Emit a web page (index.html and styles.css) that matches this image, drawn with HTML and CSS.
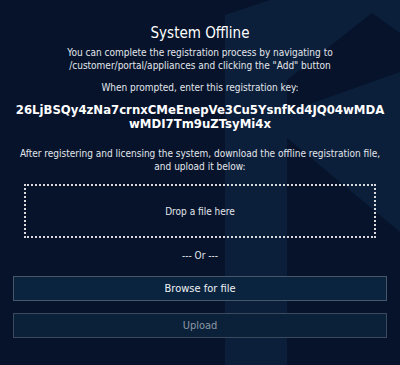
FILE: index.html
```html
<!DOCTYPE html>
<html lang="en">
<head>
<meta charset="utf-8">
<title>System Offline</title>
<link rel="stylesheet" href="styles.css">
</head>
<body>
<svg class="backdrop" width="400" height="365" viewBox="0 0 400 365" aria-hidden="true">
  <polygon class="shade" points="270,0 400,0 400,33 372,13 287,80 287,365 225,365 225,15"/>
  <polygon class="shade" points="287,112 400,72 400,232 287,138"/>
</svg>
<main class="page">
  <h1 class="title">System Offline</h1>
  <p class="desc">You can complete the registration process by navigating to<br>/customer/portal/appliances and clicking the "Add" button</p>
  <p class="prompt">When prompted, enter this registration key:</p>
  <p class="key">26LjBSQy4zNa7crnxCMeEnepVe3Cu5YsnfKd4JQ04wMDA<br>wMDI7Tm9uZTsyMi4x</p>
  <p class="after">After registering and licensing the system, download the offline registration file,<br>and upload it below:</p>
  <div class="dropzone">Drop a file here</div>
  <p class="or">--- Or ---</p>
  <button class="btn btn-browse" type="button">Browse for file</button>
  <button class="btn btn-upload" type="button" disabled>Upload</button>
</main>
</body>
</html>
```

FILE: styles.css
```css
html, body {
  margin: 0;
  padding: 0;
}

body {
  width: 400px;
  height: 365px;
  overflow: hidden;
  position: relative;
  background: #06132b;
  color: #e4e7eb;
  font-family: "DejaVu Sans Condensed", "DejaVu Sans", sans-serif;
  font-stretch: condensed;
}

.backdrop {
  position: absolute;
  left: 0;
  top: 0;
  z-index: 0;
}

.shade {
  fill: #0b1e3a;
}

.page {
  position: relative;
  z-index: 1;
  padding: 23px 13px 0;
  display: flex;
  flex-direction: column;
  align-items: stretch;
  text-align: center;
}

.title {
  margin: 0;
  font-size: 15px;
  line-height: 20px;
  font-weight: normal;
  color: #ffffff;
}

.desc {
  margin: 3px 0 0;
  font-size: 10px;
  line-height: 13px;
}

.prompt {
  margin: 9px 0 0;
  font-size: 10px;
  line-height: 13px;
}

.key {
  margin: 9px 0 0;
  font-size: 13px;
  line-height: 14px;
  font-weight: bold;
  color: #ffffff;
}

.after {
  margin: 16px 0 0;
  font-size: 10px;
  line-height: 13px;
}

.dropzone {
  margin: 11px 11px 0;
  height: 50px;
  border: 2px dotted #d8dadd;
  display: flex;
  align-items: center;
  justify-content: center;
  font-size: 10px;
}

.or {
  margin: 11px 0 0;
  font-size: 10px;
  line-height: 13px;
}

.btn {
  display: block;
  width: 100%;
  height: 25px;
  margin: 0;
  padding: 0;
  font-family: inherit;
  font-stretch: condensed;
  font-size: 11px;
  border: 1px solid #47576a;
  background: #0a2440;
  color: #f0f2f4;
}

.btn-browse {
  margin-top: 14px;
}

.btn-upload {
  margin-top: 12px;
  background: #0a2139;
  border-color: #3a4a5c;
  color: #8d98a6;
}
```
